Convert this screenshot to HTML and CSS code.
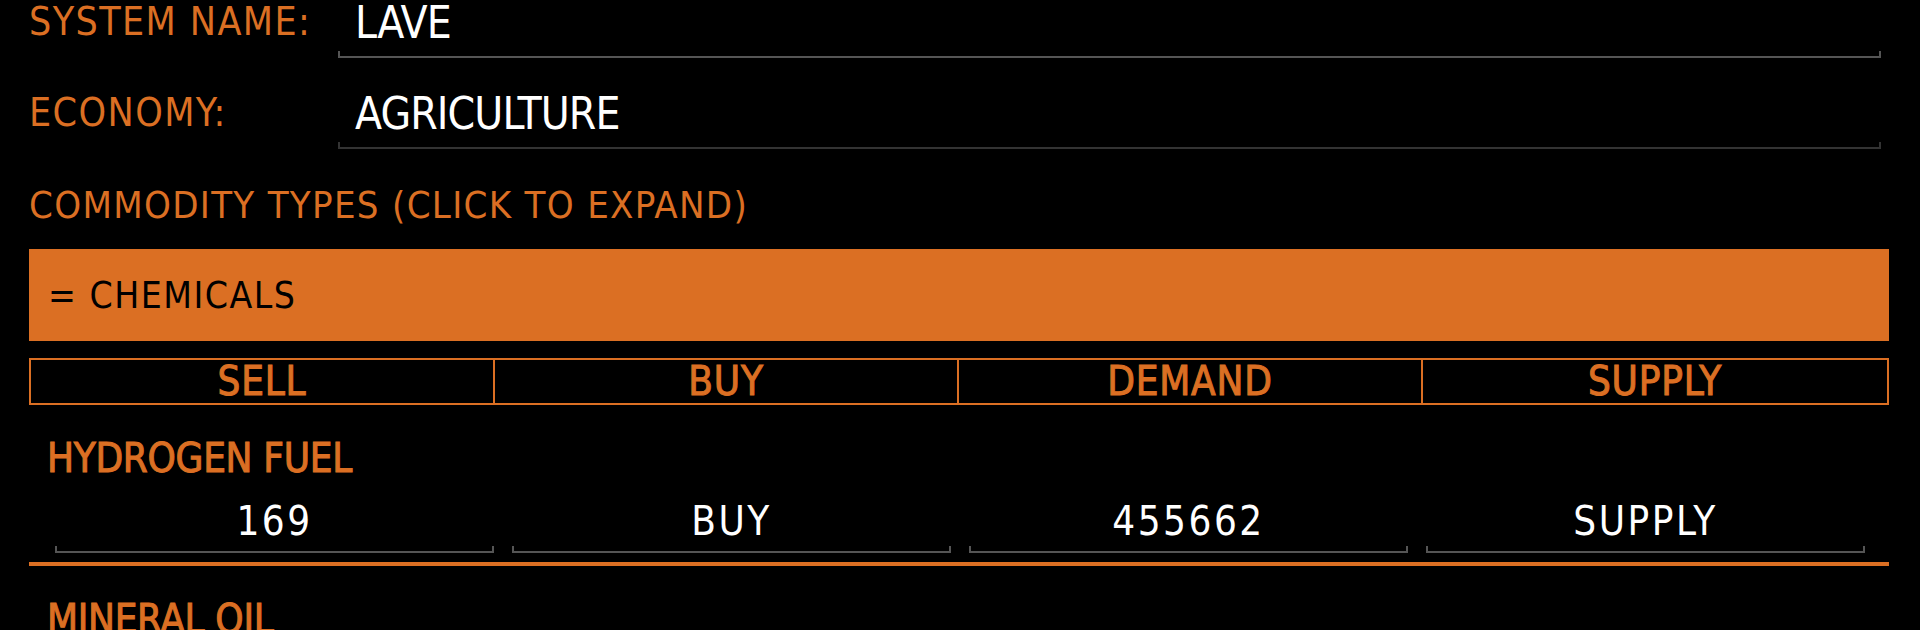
FILE: index.html
```html
<!DOCTYPE html>
<html lang="en">
<head>
    <meta charset="UTF-8">
    <meta name="viewport" content="width=device-width, initial-scale=1.0">
    <title>Commodity Market</title>
    <link rel="stylesheet" href="styles.css">
</head>
<body>
    <div class="page">
        <div class="field-row">
            <label class="field-label">SYSTEM NAME:</label>
            <div class="field-input">
                <span class="field-value">LAVE</span>
                <span class="bracket"></span>
            </div>
        </div>
        <div class="field-row">
            <label class="field-label">ECONOMY:</label>
            <div class="field-input dim">
                <span class="field-value">AGRICULTURE</span>
                <span class="bracket"></span>
            </div>
        </div>

        <h2 class="section-title">COMMODITY TYPES (CLICK TO EXPAND)</h2>

        <div class="category">= CHEMICALS</div>

        <div class="price-head">
            <div>SELL</div>
            <div>BUY</div>
            <div>DEMAND</div>
            <div>SUPPLY</div>
        </div>

        <div class="commodity">
            <div class="commodity-name">HYDROGEN FUEL</div>
            <div class="commodity-values">
                <div class="value-box"><span>169</span><span class="bracket"></span></div>
                <div class="value-box"><span>BUY</span><span class="bracket"></span></div>
                <div class="value-box"><span>455662</span><span class="bracket"></span></div>
                <div class="value-box"><span>SUPPLY</span><span class="bracket"></span></div>
            </div>
        </div>

        <div class="commodity">
            <div class="commodity-name">MINERAL OIL</div>
            <div class="commodity-values">
                <div class="value-box"><span>210</span><span class="bracket"></span></div>
                <div class="value-box"><span>BUY</span><span class="bracket"></span></div>
                <div class="value-box"><span>180334</span><span class="bracket"></span></div>
                <div class="value-box"><span>SUPPLY</span><span class="bracket"></span></div>
            </div>
        </div>
    </div>
</body>
</html>
```

FILE: styles.css
```css
body {
    margin: 0;
    padding: 0;
    background: #000;
    color: #db6f23;
    font-family: "DejaVu Sans Condensed", "Liberation Sans Narrow", "DejaVu Sans", sans-serif;
    font-stretch: condensed;
    overflow: hidden;
}
.page {
    padding: 0 31px 0 29px;
}

/* top fields */
.field-row {
    display: flex;
    margin-bottom: 33px;
}
.field-label {
    width: 309px;
    flex: none;
    font-size: 39px;
    line-height: 39px;
    letter-spacing: 1.4px;
    margin-top: 2px;
}
.field-input {
    flex: 1;
    display: flex;
    flex-direction: column;
    margin-right: 8px;
}
.field-value {
    color: #fff;
    font-size: 44px;
    line-height: 45px;
    letter-spacing: -0.9px;
    padding-left: 17px;
}
.bracket {
    display: block;
    height: 5px;
    border: 2px solid #555;
    border-top: none;
    margin-top: 6px;
}
.field-input.dim .bracket {
    border-color: #333;
}

.section-title {
    font-size: 38px;
    line-height: 38px;
    font-weight: normal;
    letter-spacing: 1.3px;
    margin: 37px 0 25px;
}

/* category bar */
.category {
    height: 92px;
    display: flex;
    align-items: center;
    padding-left: 19px;
    background: #db6f23;
    color: #000;
    font-size: 37px;
    letter-spacing: 1.5px;
}

.price-head {
    display: grid;
    grid-template-columns: repeat(4, 1fr);
    margin-top: 17px;
    border: 2px solid #db6f23;
}
.price-head div {
    text-align: center;
    font-size: 40px;
    line-height: 43px;
    letter-spacing: 0.8px;
    -webkit-text-stroke: 1px #db6f23;
    border-right: 2px solid #db6f23;
}
.price-head div:last-child {
    border-right: none;
}

/* commodity rows */
.commodity {
    border-bottom: 4px solid #db6f23;
    padding-bottom: 9px;
    margin-top: 33px;
}
.commodity-name {
    font-size: 40px;
    line-height: 40px;
    letter-spacing: -0.3px;
    -webkit-text-stroke: 1px #db6f23;
    padding-left: 18px;
}
.commodity-values {
    display: grid;
    grid-template-columns: repeat(4, 1fr);
    column-gap: 18px;
    padding: 0 24px 0 26px;
    margin-top: 24px;
}
.value-box {
    display: flex;
    flex-direction: column;
    text-align: center;
    color: #fff;
    font-size: 40px;
    line-height: 39px;
    letter-spacing: 2.5px;
}
.value-box .bracket {
    margin-top: 5px;
}
```
